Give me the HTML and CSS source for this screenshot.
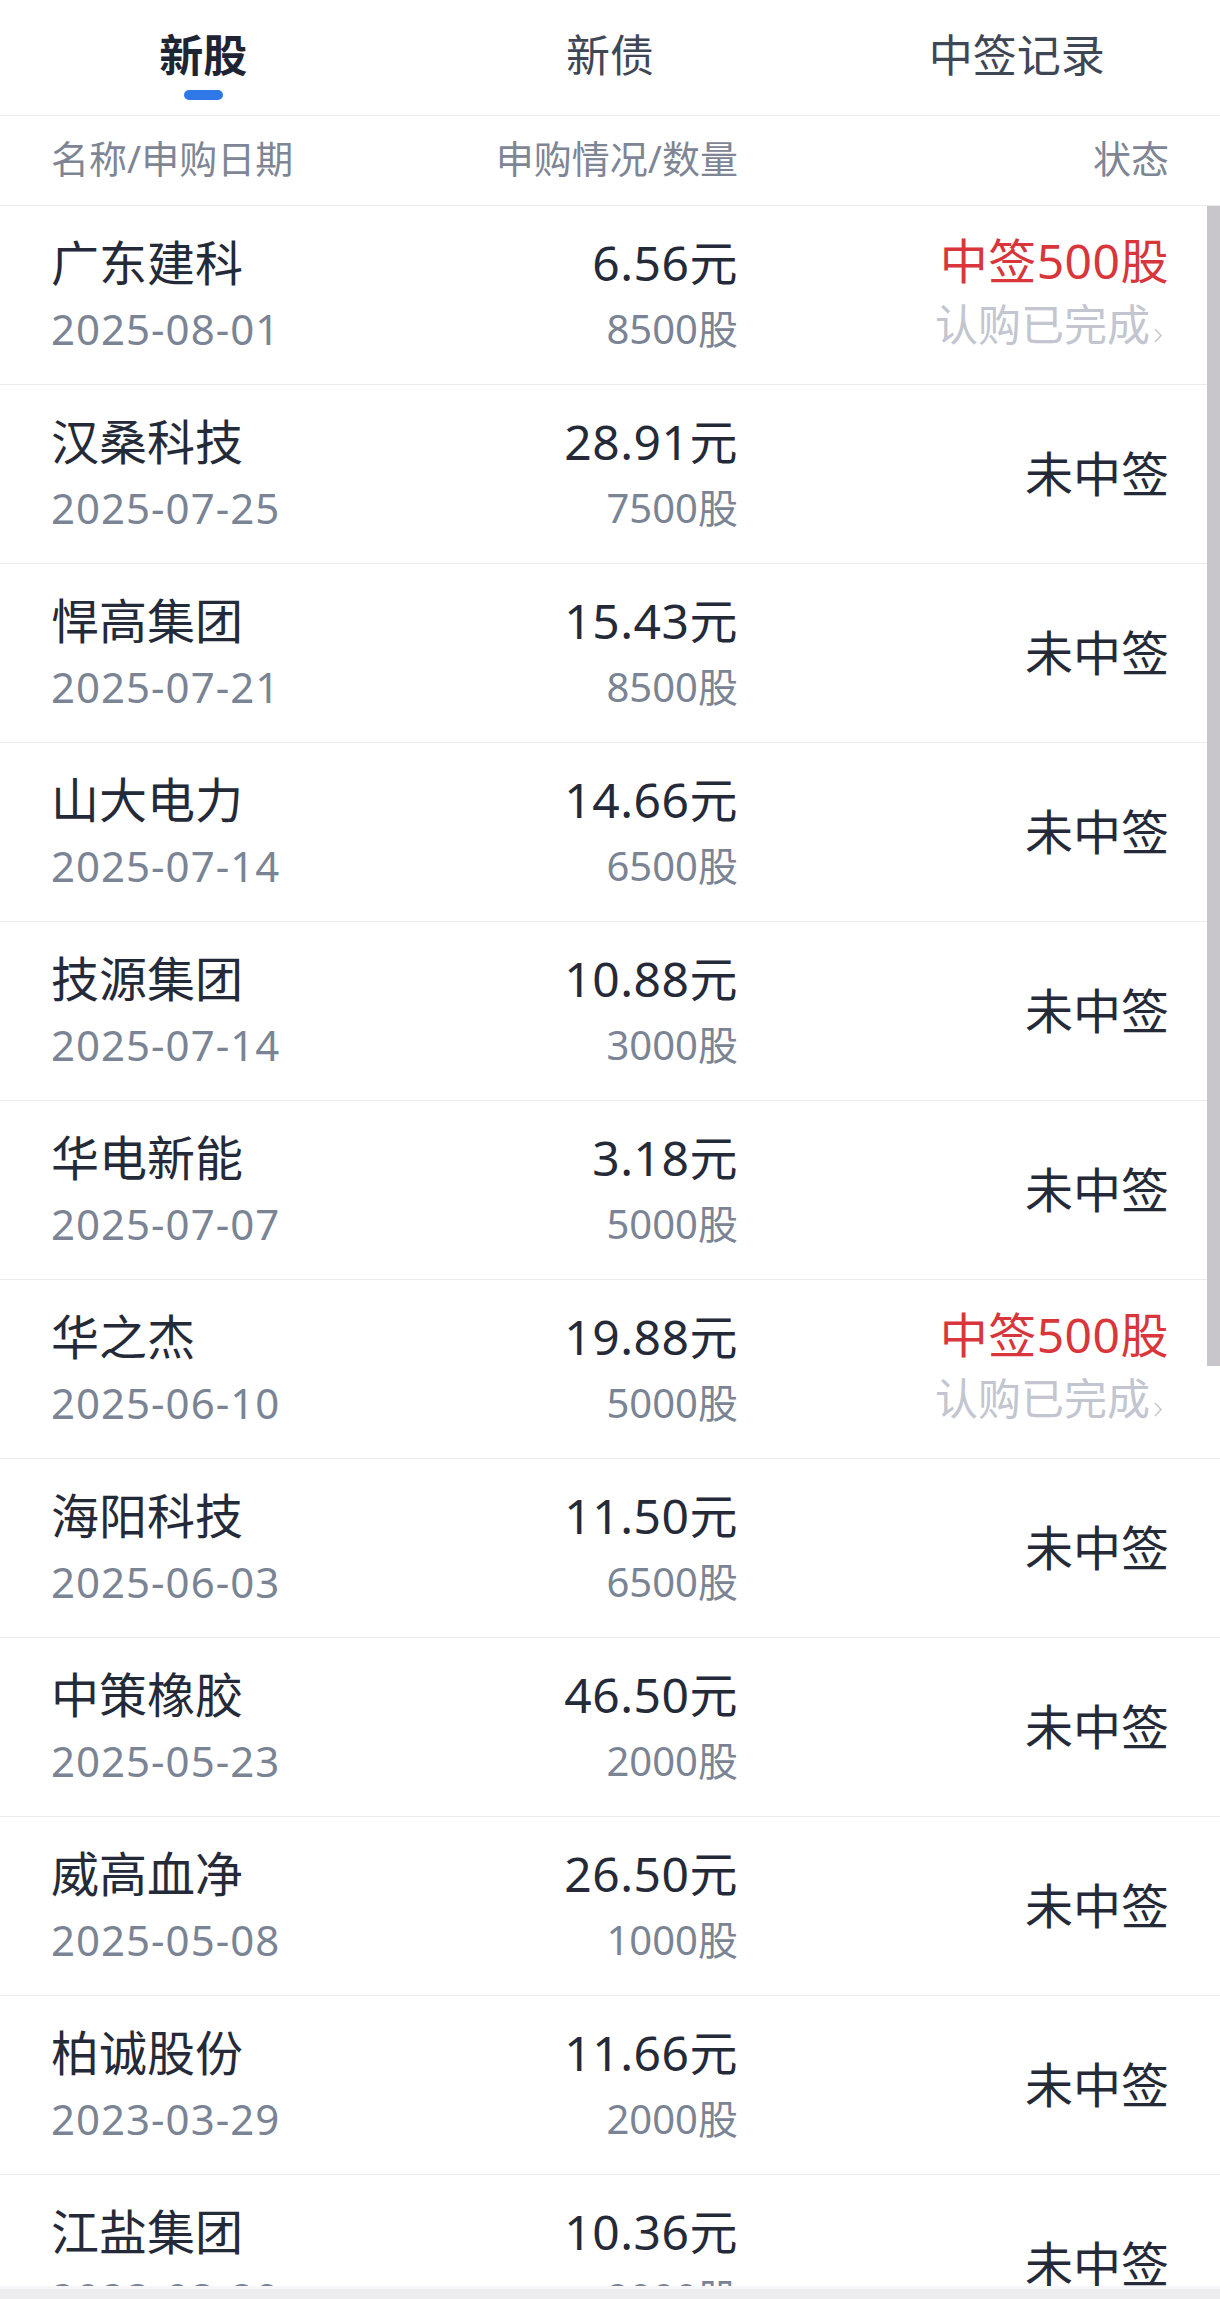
FILE: index.html
```html
<!DOCTYPE html>
<html lang="zh-CN">
<head>
    <meta charset="UTF-8">
    <title>新股申购记录</title>
    <link rel="stylesheet" href="styles.css">
</head>
<body>

<nav class="tabs">
    <div class="tab active">
        <span class="tab-text">新股</span>
        <span class="tab-bar"></span>
    </div>
    <div class="tab">
        <span class="tab-text">新债</span>
    </div>
    <div class="tab">
        <span class="tab-text">中签记录</span>
    </div>
</nav>

<div class="list-head">
    <span>名称/申购日期</span>
    <span class="num">申购情况/数量</span>
    <span class="num">状态</span>
</div>

<div class="list">
    <div class="row">
        <div class="cell"><span class="name">广东建科</span><span class="date">2025-08-01</span></div>
        <div class="cell num"><span class="price">6.56元</span><span class="qty">8500股</span></div>
        <div class="cell num status-win">
            <span class="win">中签500股</span>
            <span class="done">认购已完成<svg class="chev" width="10" height="17" viewBox="0 0 10 17"><polyline points="2,2 8,8.5 2,15" fill="none" stroke="#c6c8d1" stroke-width="1.5"/></svg></span>
        </div>
    </div>
    <div class="row">
        <div class="cell"><span class="name">汉桑科技</span><span class="date">2025-07-25</span></div>
        <div class="cell num"><span class="price">28.91元</span><span class="qty">7500股</span></div>
        <div class="cell num"><span class="lose">未中签</span></div>
    </div>
    <div class="row">
        <div class="cell"><span class="name">悍高集团</span><span class="date">2025-07-21</span></div>
        <div class="cell num"><span class="price">15.43元</span><span class="qty">8500股</span></div>
        <div class="cell num"><span class="lose">未中签</span></div>
    </div>
    <div class="row">
        <div class="cell"><span class="name">山大电力</span><span class="date">2025-07-14</span></div>
        <div class="cell num"><span class="price">14.66元</span><span class="qty">6500股</span></div>
        <div class="cell num"><span class="lose">未中签</span></div>
    </div>
    <div class="row">
        <div class="cell"><span class="name">技源集团</span><span class="date">2025-07-14</span></div>
        <div class="cell num"><span class="price">10.88元</span><span class="qty">3000股</span></div>
        <div class="cell num"><span class="lose">未中签</span></div>
    </div>
    <div class="row">
        <div class="cell"><span class="name">华电新能</span><span class="date">2025-07-07</span></div>
        <div class="cell num"><span class="price">3.18元</span><span class="qty">5000股</span></div>
        <div class="cell num"><span class="lose">未中签</span></div>
    </div>
    <div class="row">
        <div class="cell"><span class="name">华之杰</span><span class="date">2025-06-10</span></div>
        <div class="cell num"><span class="price">19.88元</span><span class="qty">5000股</span></div>
        <div class="cell num status-win">
            <span class="win">中签500股</span>
            <span class="done">认购已完成<svg class="chev" width="10" height="17" viewBox="0 0 10 17"><polyline points="2,2 8,8.5 2,15" fill="none" stroke="#c6c8d1" stroke-width="1.5"/></svg></span>
        </div>
    </div>
    <div class="row">
        <div class="cell"><span class="name">海阳科技</span><span class="date">2025-06-03</span></div>
        <div class="cell num"><span class="price">11.50元</span><span class="qty">6500股</span></div>
        <div class="cell num"><span class="lose">未中签</span></div>
    </div>
    <div class="row">
        <div class="cell"><span class="name">中策橡胶</span><span class="date">2025-05-23</span></div>
        <div class="cell num"><span class="price">46.50元</span><span class="qty">2000股</span></div>
        <div class="cell num"><span class="lose">未中签</span></div>
    </div>
    <div class="row">
        <div class="cell"><span class="name">威高血净</span><span class="date">2025-05-08</span></div>
        <div class="cell num"><span class="price">26.50元</span><span class="qty">1000股</span></div>
        <div class="cell num"><span class="lose">未中签</span></div>
    </div>
    <div class="row">
        <div class="cell"><span class="name">柏诚股份</span><span class="date">2023-03-29</span></div>
        <div class="cell num"><span class="price">11.66元</span><span class="qty">2000股</span></div>
        <div class="cell num"><span class="lose">未中签</span></div>
    </div>
    <div class="row">
        <div class="cell"><span class="name">江盐集团</span><span class="date">2023-03-29</span></div>
        <div class="cell num"><span class="price">10.36元</span><span class="qty">2000股</span></div>
        <div class="cell num"><span class="lose">未中签</span></div>
    </div>
</div>

<div class="scroll-thumb"></div>
<div class="home-bar"></div>

</body>
</html>
```

FILE: styles.css
```css
body {
    font-family: 'Noto Sans', 'Noto Sans CJK SC', sans-serif;
    background-color: #fff;
    color: #252a39;
    margin: 0;
    padding: 0;
    height: 2299px;
    overflow: hidden;
}

/* tab bar */
.tabs {
    display: grid;
    grid-template-columns: 1fr 1fr 1fr;
    height: 115px;
    border-bottom: 1px solid #ececee;
}
.tab {
    display: flex;
    flex-direction: column;
    align-items: center;
    padding-top: 25px;
}
.tab-text {
    font-size: 44px;
    line-height: 60px;
    color: #3f4757;
}
.tab.active .tab-text {
    font-weight: 700;
    color: #1f2433;
}
.tab-bar {
    display: block;
    width: 39px;
    height: 10px;
    margin-top: 5px;
    border-radius: 5px;
    background-color: #2f78e8;
}

/* list */
.list-head,
.row {
    display: grid;
    grid-template-columns: 1fr 300px 431px;
    padding: 0 51px;
    border-bottom: 1px solid #ececee;
}
.list-head {
    height: 83px;
    padding-bottom: 6px;
    align-items: center;
    font-size: 38px;
    line-height: 50px;
    color: #7e8695;
}
.num {
    text-align: right;
}
.row {
    height: 178px;
}
.cell {
    display: flex;
    flex-direction: column;
    justify-content: center;
}
.cell.num {
    align-items: flex-end;
}
.name,
.price {
    font-size: 48px;
    line-height: 68px;
    color: #252a39;
}
.price {
    letter-spacing: 0.5px;
}
.date,
.qty {
    line-height: 64px;
    color: #7b8494;
}
.date {
    font-size: 42px;
    letter-spacing: 1px;
}
.qty {
    font-size: 40px;
}
.lose {
    font-size: 48px;
    line-height: 64px;
    color: #252a39;
}
.status-win {
    padding-bottom: 4px;
}
.win {
    font-size: 48px;
    line-height: 64px;
    letter-spacing: 0.5px;
    color: #d8363a;
}
.done {
    font-size: 43px;
    line-height: 64px;
    color: #c3c6d0;
    margin-right: 6px;
}
.chev {
    margin-left: 3px;
    vertical-align: -3px;
}

/* overlays */
.scroll-thumb {
    position: fixed;
    top: 206px;
    right: 0;
    width: 13px;
    height: 1160px;
    background-color: #c9c6cb;
}
.home-bar {
    position: fixed;
    left: 0;
    right: 0;
    bottom: 0;
    height: 10px;
    border-top: 3px solid #f6f6f9;
    background-color: #ededef;
}
```
